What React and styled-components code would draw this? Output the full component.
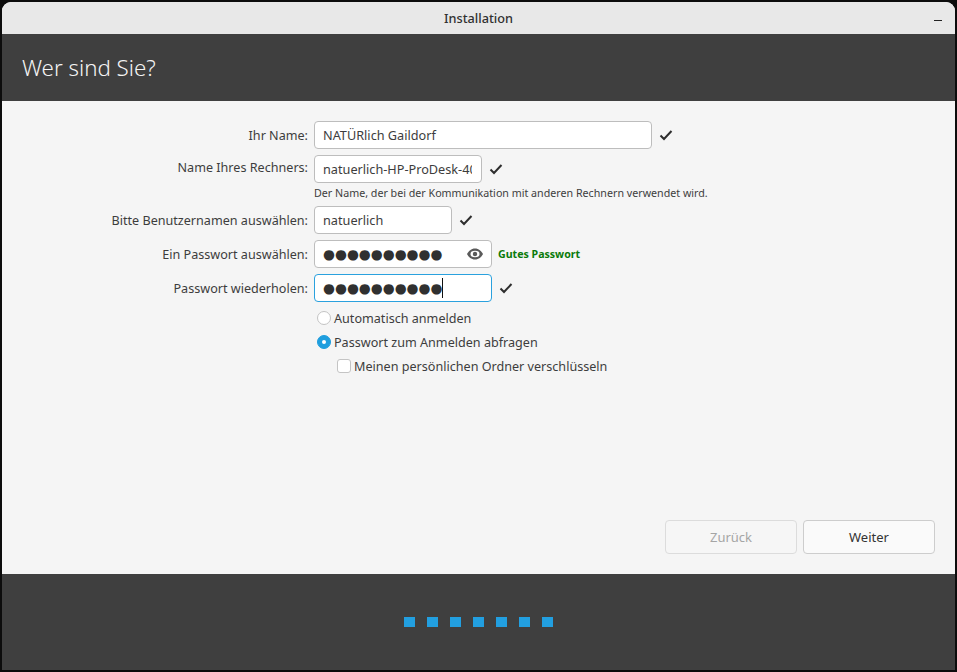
import React from 'react';
import styled, { createGlobalStyle } from 'styled-components';

const Global = createGlobalStyle`
  html, body { margin: 0; padding: 0; background: #0b0b0b; }
  body { font-family: "Noto Sans", "Open Sans", sans-serif; }
  * { box-sizing: border-box; }
`;
const Desktop = styled.div`
  width: 957px; height: 672px; padding: 2px; background: #0c0c0c; overflow: hidden;
`;
const Window = styled.div`
  width: 953px; height: 668px; display: flex; flex-direction: column;
  border-radius: 9px 9px 0 0; overflow: hidden; background: #f5f5f5;
`;
const TitleBar = styled.div`
  position: relative; height: 32px; flex: none; display: flex; align-items: center; justify-content: center;
  background: #e8e8e8; color: #303030; font-size: 12.7px; font-weight: 500;
`;
const Minimize = styled.span`
  position: absolute; right: 13px; top: 18px; width: 8px; height: 1px; background: #222;
`;
const Header = styled.header`
  height: 67px; flex: none; display: flex; align-items: center; padding-left: 20px;
  background: #3f3f3f; color: #f4f4f4; font-size: 22.3px;
`;
const Heading = styled.h1`
  margin: 0; font: inherit; font-weight: 300;
`;
const Content = styled.main`
  flex: 1; display: flex; flex-direction: column; padding: 20px 20px 20px 0; background: #f5f5f5; color: #333;
  font-size: 13px;
`;
const Form = styled.div`
  display: grid; grid-template-columns: 306px 1fr; column-gap: 6px; row-gap: 6px; align-items: center;
`;
const Label = styled.label`
  text-align: right; color: #3d3d3d; font-size: 12.6px; white-space: nowrap;
  ${p => p.$raised && 'margin-bottom: 4px;'}
`;
const Row = styled.div`
  display: flex; align-items: center; gap: 7px;
`;
const Input = styled.input`
  width: ${p => p.$w}px; height: 28px; padding: 0 9px 0 8px; flex: none;
  background: #fff; border: 1px solid #bdbdbd; border-radius: 4px;
  font: inherit; font-size: 12.7px; color: #3d3d3d; outline: none;
`;
const PasswordBox = styled.div`
  width: 178px; height: 28px; padding: 0 8px 0 8px; flex: none; display: flex; align-items: center; justify-content: space-between;
  background: #fff; border: 1px solid ${p => p.$focus ? '#2aa1de' : '#bdbdbd'}; border-radius: 4px;
`;
const Bullets = styled.span`
  font-family: "DejaVu Sans", sans-serif; font-size: 13.7px; line-height: 20px; color: #303030; display: inline-flex; height: 20px;
  ${p => p.$cursor && 'border-right: 1px solid #111;'}
`;
const Hint = styled.div`
  grid-column: 2; height: 11px; font-size: 10.7px; line-height: 9px; color: #3d3d3d; white-space: nowrap;
`;
const Strength = styled.span`
  color: #0a7a0a; font-size: 10.6px; font-weight: 700; margin-left: -1px;
`;
const Options = styled.div`
  grid-column: 2; display: flex; flex-direction: column; margin-top: -2px;
`;
const Option = styled.div`
  display: flex; align-items: center; gap: 3px; height: 24px; font-size: 12.6px; color: #3d3d3d;
  padding-left: ${p => p.$indent ? 23 : 3}px;
`;
const Radio = styled.span`
  width: 14px; height: 14px; border-radius: 50%; flex: none; display: flex; align-items: center; justify-content: center;
  background: ${p => p.$on ? '#1f9ede' : '#fff'}; border: 1px solid ${p => p.$on ? '#1f9ede' : '#c4c4c4'};
  &::after { content: ''; width: 4px; height: 4px; border-radius: 50%; background: ${p => p.$on ? '#fff' : 'transparent'}; }
`;
const Check = styled.span`
  width: 14px; height: 14px; flex: none; border-radius: 3px; background: #fff; border: 1px solid #c4c4c4;
`;
const Actions = styled.div`
  margin-top: auto; display: flex; justify-content: flex-end; gap: 6px;
`;
const Button = styled.button`
  width: 132px; height: 34px; border-radius: 4px; font: inherit; font-size: 13px;
  background: ${p => p.disabled ? '#f6f6f6' : '#fafafa'};
  border: 1px solid ${p => p.disabled ? '#dcdcdc' : '#cdcdcd'};
  color: ${p => p.disabled ? '#a5a5a5' : '#333'};
`;
const Footer = styled.footer`
  height: 96px; flex: none; display: flex; align-items: center; justify-content: center; gap: 12px; background: #3f3f3f;
`;
const Step = styled.span`
  width: 11px; height: 10px; background: #229fe0;
`;
const Tick = () => (
  <svg width="14" height="14" viewBox="0 0 14 14" style={{ flex: 'none' }}>
    <path d="M1.5 7.5 L5 11 L12.5 3" fill="none" stroke="#2e2e2e" strokeWidth="2" />
  </svg>
);
const Eye = () => (
  <svg width="16" height="16" viewBox="0 0 16 16" style={{ flex: 'none' }}>
    <path d="M8 2.500C4.300 2.500 1.500 5 0 8c1.500 3 4.300 5.500 8 5.500s6.500-2.500 8-5.500c-1.500-3-4.300-5.500-8-5.500z" fill="#5a5a5a" />
    <ellipse cx="8" cy="8" rx="4.500" ry="3.300" fill="#fff" />
    <circle cx="8" cy="8" r="2.200" fill="#5a5a5a" />
  </svg>
);

export default function App() {
  return (
    <Desktop>
      <Global />
      <Window>
        <TitleBar>Installation<Minimize /></TitleBar>
        <Header><Heading>Wer sind Sie?</Heading></Header>
        <Content>
          <Form>
            <Label>Ihr Name:</Label>
            <Row><Input $w={338} readOnly value="NATÜRlich Gaildorf" /><Tick /></Row>
            <Label $raised>Name Ihres Rechners:</Label>
            <Row><Input $w={168} readOnly value="natuerlich-HP-ProDesk-400" /><Tick /></Row>
            <Hint>Der Name, der bei der Kommunikation mit anderen Rechnern verwendet wird.</Hint>
            <Label>Bitte Benutzernamen auswählen:</Label>
            <Row><Input $w={138} readOnly value="natuerlich" /><Tick /></Row>
            <Label>Ein Passwort auswählen:</Label>
            <Row>
              <PasswordBox><Bullets>●●●●●●●●●●</Bullets><Eye /></PasswordBox>
              <Strength>Gutes Passwort</Strength>
            </Row>
            <Label>Passwort wiederholen:</Label>
            <Row>
              <PasswordBox $focus><Bullets $cursor>●●●●●●●●●●</Bullets></PasswordBox>
              <Tick />
            </Row>
            <Options>
              <Option><Radio />Automatisch anmelden</Option>
              <Option><Radio $on />Passwort zum Anmelden abfragen</Option>
              <Option $indent><Check />Meinen persönlichen Ordner verschlüsseln</Option>
            </Options>
          </Form>
          <Actions>
            <Button disabled>Zurück</Button>
            <Button>Weiter</Button>
          </Actions>
        </Content>
        <Footer>
          {Array.from({ length: 7 }, (_, i) => <Step key={i} />)}
        </Footer>
      </Window>
    </Desktop>
  );
}
